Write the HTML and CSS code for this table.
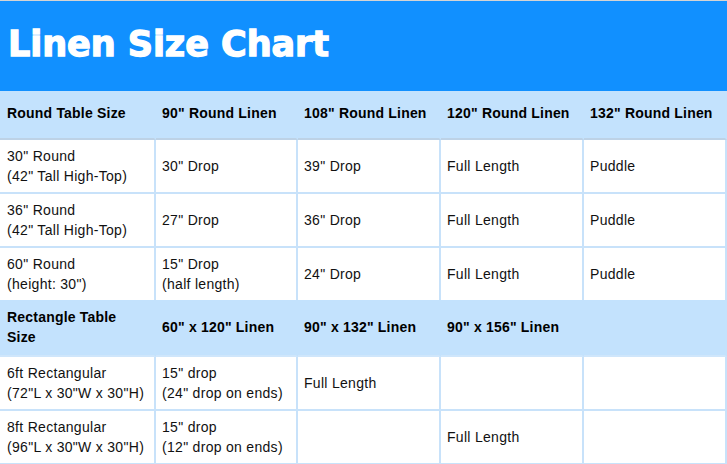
FILE: index.html
```html
<!DOCTYPE html>
<html>
<head>
<meta charset="utf-8">
<title>Linen Size Chart</title>
<link rel="stylesheet" href="styles.css">
</head>
<body>
<div class="page">
  <header class="banner"><h1 class="title">Linen Size Chart</h1></header>
  <table class="chart">
    <colgroup>
      <col class="c1"><col class="c2"><col class="c3"><col class="c4"><col class="c5">
    </colgroup>
    <tr class="head head-top">
      <th>Round Table Size</th><th>90" Round Linen</th><th>108" Round Linen</th><th>120" Round Linen</th><th>132" Round Linen</th>
    </tr>
    <tr class="row">
      <td>30" Round<br>(42" Tall High-Top)</td><td>30" Drop</td><td>39" Drop</td><td>Full Length</td><td>Puddle</td>
    </tr>
    <tr class="row">
      <td>36" Round<br>(42" Tall High-Top)</td><td>27" Drop</td><td>36" Drop</td><td>Full Length</td><td>Puddle</td>
    </tr>
    <tr class="row row-last">
      <td>60" Round<br>(height: 30")</td><td>15" Drop<br>(half length)</td><td>24" Drop</td><td>Full Length</td><td>Puddle</td>
    </tr>
    <tr class="head head-mid">
      <th>Rectangle Table<br>Size</th><th>60" x 120" Linen</th><th>90" x 132" Linen</th><th>90" x 156" Linen</th><th></th>
    </tr>
    <tr class="row">
      <td>6ft Rectangular<br>(72"L x 30"W x 30"H)</td><td>15" drop<br>(24" drop on ends)</td><td>Full Length</td><td></td><td></td>
    </tr>
    <tr class="row">
      <td>8ft Rectangular<br>(96"L x 30"W x 30"H)</td><td>15" drop<br>(12" drop on ends)</td><td></td><td>Full Length</td><td></td>
    </tr>
  </table>
</div>
</body>
</html>
```
FILE: styles.css
```css
html, body {
  margin: 0;
  padding: 0;
  background: #ffffff;
}
.page {
  width: 727px;
  border-top: 1px solid #d4d4d4;
  font-family: "Liberation Sans", Arial, sans-serif;
  color: #111111;
}
.banner {
  height: 90px;
  background: #1190ff;
  display: flex;
  align-items: center;
  padding-left: 8px;
  box-sizing: border-box;
}
.title {
  margin: 0 0 4px 0;
  font-family: "DejaVu Sans", sans-serif;
  font-weight: bold;
  font-size: 35px;
  line-height: 40px;
  color: #ffffff;
  -webkit-text-stroke: 1.3px #ffffff;
  letter-spacing: -0.05px;
}
.chart {
  width: 727px;
  table-layout: fixed;
  border-collapse: separate;
  border-spacing: 0;
  font-size: 14px;
  line-height: 20px;
  letter-spacing: 0.3px;
}
.c1 { width: 156px; }
.c2 { width: 142px; }
.c3 { width: 143px; }
.c4 { width: 143px; }
.c5 { width: 143px; }
.chart th, .chart td {
  padding: 0 2px 0 6px;
  vertical-align: middle;
  text-align: left;
  border-right: 2px solid #c8e2fa;
  border-bottom: 2px solid #c8e2fa;
  white-space: nowrap;
  overflow: hidden;
}
.chart th:first-child, .chart td:first-child {
  padding-left: 7px;
}
.head th {
  background: #c3e2fd;
  border-right-color: transparent;
  font-weight: bold;
  color: #000000;
  letter-spacing: 0.2px;
}
.head-top th {
  height: 44px;
  padding-bottom: 3px;
  border-bottom-color: #bdd2e6;
}
.head-mid th {
  height: 54px;
  padding-bottom: 1px;
  border-bottom-color: #cfe6fb;
}
.row td {
  height: 52px;
}
.row-last td {
  border-bottom: none;
  padding-bottom: 1px;
  height: 51px;
}
```
